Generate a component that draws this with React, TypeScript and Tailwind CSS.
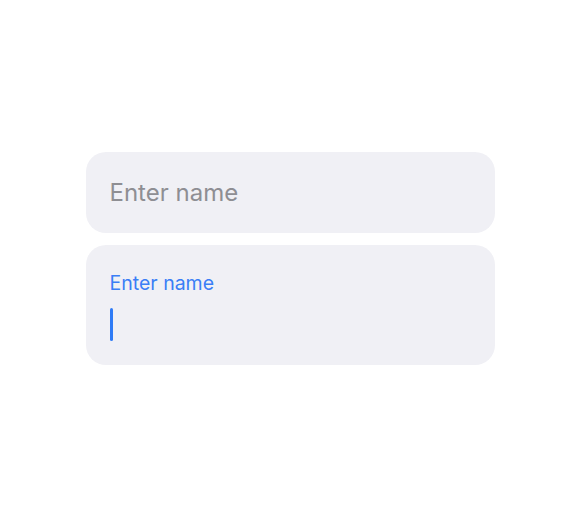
export default function App() {
  return (
    <div
      className="flex min-h-[512px] w-full flex-col items-center justify-center bg-white pt-[5px]"
      style={{ fontFamily: "Inter, 'Noto Sans', sans-serif" }}
    >
      <div className="flex w-[409px] flex-col gap-3">
        <div className="flex h-[81px] items-center rounded-[20px] bg-[#f0f0f5] px-6">
          <span className="text-[24px] leading-none text-[#8e8e93]">Enter name</span>
        </div>
        <div className="flex h-[120px] flex-col rounded-[20px] bg-[#f0f0f5] px-6 pt-[29px]">
          <span className="text-[19.5px] leading-[19px] text-[#3a7ef6]">Enter name</span>
          <div className="mt-[15px] h-[33px] w-[3px] rounded-full bg-[#2f7bf6]" />
        </div>
      </div>
    </div>
  );
}
